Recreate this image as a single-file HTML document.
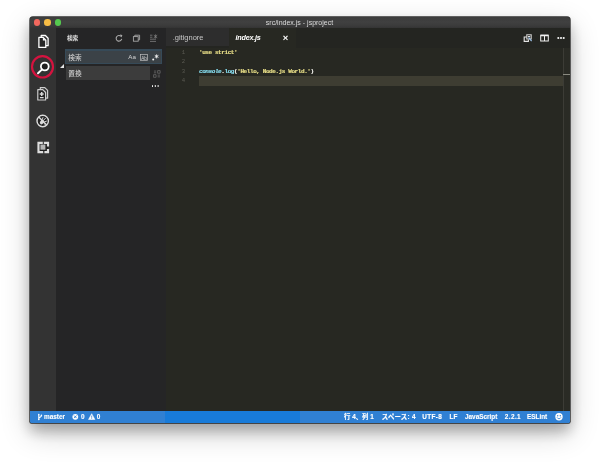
<!DOCTYPE html>
<html lang="ja">
<head>
<meta charset="utf-8">
<title>src/index.js - jsproject</title>
<style>
html,body{margin:0;padding:0;}
body{width:600px;height:465px;background:#fff;position:relative;overflow:hidden;font-family:"Liberation Sans","Noto Sans CJK JP",sans-serif;}
.abs{position:absolute;}
#stage{position:absolute;left:0;top:0;width:600px;height:465px;will-change:transform;}
#win{position:absolute;left:29.5px;top:17px;width:540.5px;height:406px;background:#272822;border-radius:3px 3px 1.5px 1.5px;box-shadow:0 8px 14px rgba(0,0,0,.27),0 10px 30px rgba(0,0,0,.2),0 0 0 0.7px rgba(0,0,0,.8);overflow:hidden;}
#title{left:0;top:0;width:540.5px;height:11px;background:linear-gradient(#3c3c3c,#404040 45%,#3c3c3c 75%,#343434);}
#title .t{position:absolute;left:0;width:540px;top:0;height:11px;line-height:11px;text-align:center;font-size:7px;color:#dcdcdc;}
.tl{position:absolute;top:2.400px;width:6.6px;height:6.6px;border-radius:50%;}
#act{left:0;top:11px;width:26px;height:383.5px;background:#333333;}
#side{left:26px;top:11px;width:110px;height:383.5px;background:#252526;}
#tabs{left:136px;top:11px;width:404.5px;height:19.5px;background:#242521;}
#editor{left:136px;top:30.5px;width:404.5px;height:364px;background:#272822;}
#status{left:0;top:394.4px;width:540.5px;height:11.6px;background:#3080d3;}
#status .l{position:absolute;left:135.5px;top:0;width:135px;height:11.5px;background:#187bd9;}
.st{position:absolute;top:0;height:11.5px;line-height:11.5px;font-size:6.4px;color:#fff;font-weight:bold;white-space:nowrap;-webkit-text-stroke:0.12px #fff;}
.code{position:absolute;left:33.5px;font-family:"Liberation Mono",monospace;font-size:6px;letter-spacing:-0.415px;line-height:9.5px;height:9.5px;white-space:pre;color:#f8f8f2;font-weight:bold;-webkit-text-stroke:0.18px currentColor;}
.ln{position:absolute;left:6.6px;width:13px;text-align:right;font-family:"Liberation Mono",monospace;font-size:5.6px;line-height:9.5px;height:9.5px;color:#5a5a52;}
</style>
</head>
<body>
<div id="stage">
<div id="win">
  <div id="title" class="abs">
    <div class="tl" style="left:4.100px;background:#f2685e;"></div>
    <div class="tl" style="left:14.800px;background:#f7bd45;"></div>
    <div class="tl" style="left:25.200px;background:#55c94f;"></div>
    <div class="t">src/index.js - jsproject</div>
  </div>
  <div id="act" class="abs">
    <svg class="abs" style="left:0;top:0" width="26" height="160" viewBox="0 0 26 160">
      <!-- explorer -->
      <g fill="none" stroke="#ffffff" stroke-width="1.300" stroke-linejoin="round">
        <path d="M11.200 9.300V7.500h4.200l2.700 2.700v7.500h-2.300"/>
        <path d="M8.900 9.400h4.200l2.700 2.700v7.300H8.900z" fill="#262626"/>
      </g>
      <path d="M12.900 9.400v3h3z" fill="#ffffff"/>
      <!-- search highlight circle -->
      <ellipse cx="12.500" cy="38.800" rx="10.500" ry="10.700" fill="none" stroke="#d4133f" stroke-width="2.200"/>
      <!-- search -->
      <circle cx="14.800" cy="38.500" r="3.900" fill="#202020" stroke="#ffffff" stroke-width="1.800"/>
      <path d="M12.100 41.400L8 45.300" stroke="#ffffff" stroke-width="1.900" stroke-linecap="round"/>
      <!-- scm -->
      <g transform="translate(-0.500 -0.300)">
      <g fill="none" stroke="#cdcdcd" stroke-width="1.200" stroke-linejoin="round">
        <path d="M10.800 61.800V59.900h4.500l2.800 2.800v7.800h-2"/>
        <path d="M8.300 62h5l2.800 2.800v7.500H8.300z" fill="#242424"/>
      </g>
      <path d="M12.200 64.400v4M10.200 66.400h4" stroke="#d8d8d8" stroke-width="1.500" fill="none"/>
      <path d="M10.400 69.900h3.700" stroke="#d8d8d8" stroke-width="1.200" fill="none"/>
      </g>
      <!-- debug -->
      <g transform="translate(-0.300 -0.400)">
      <circle cx="13" cy="93.400" r="5.700" fill="#232323" stroke="#dcdcdc" stroke-width="1.400"/>
      <path d="M9 89.400l8 8" stroke="#dcdcdc" stroke-width="1.300"/>
      <ellipse cx="12.200" cy="94.600" rx="1.800" ry="2.300" fill="#dcdcdc" transform="rotate(40 12.200 94.600)"/>
      <path d="M12.600 94l3.400-3.600M13.400 94.800l3.800-1.400M12 93.200l1.400-3.600M14.200 96.200l1.600 0.400" stroke="#dcdcdc" stroke-width="0.900"/>
      </g>
      <!-- extensions -->
      <rect x="8.500" y="114.800" width="9.500" height="9.300" fill="#1e1e1e"/>
      <g fill="none" stroke="#dedede" stroke-width="2.200">
        <path d="M12.800 114.800H8.500V124.100H13.200M13.800 114.800H18V118.400M18 121V124.100H14.400"/>
      </g>
      <rect x="10.400" y="116.500" width="5" height="5.200" fill="#b4b4b4"/>
    </svg>
  </div>
  <div id="side" class="abs">
    <div class="abs" style="left:11.400px;top:6.100px;font-size:5.700px;line-height:8px;color:#e2e2e2;font-weight:bold;">検索</div>
    <svg class="abs" style="left:55.200px;top:4px" width="54" height="14" viewBox="0 0 54 14">
      <!-- refresh -->
      <path d="M10 4.400A2.800 2.800 0 1 0 10.700 6.900" fill="none" stroke="#aaaaaa" stroke-width="1.100"/>
      <path d="M8.800 2.600l2.500 0.400l-0.600 2.500z" fill="#aaaaaa"/>
      <!-- collapse all -->
      <g fill="none" stroke="#a6a6a6" stroke-width="0.900">
        <path d="M23.800 4.600v-1.400h4.800v4.600h-1.400"/>
        <rect x="22.400" y="4.600" width="4.800" height="4.600"/>
      </g>
      <!-- clear -->
      <g stroke="#808080" stroke-width="0.8" fill="none">
        <path d="M39 3.200h2.400M39 5.200h2.400M39 7.200h6M39 9.400h6M44.600 2.400v4M42.800 3.200l3.400 2.600M46.200 3.200l-3.400 2.600"/>
      </g>
    </svg>
    <div class="abs" style="left:9.600px;top:21.400px;width:97.200px;height:14.600px;background:#364a58;"></div>
    <div class="abs" style="left:10.600px;top:22.600px;width:95.200px;height:12.200px;background:#3b4247;"></div>
    <div class="abs" style="left:12.800px;top:24.800px;font-size:6.700px;line-height:9px;color:#cacaca;font-weight:500;">検索</div>
    <div class="abs" style="left:72.800px;top:23.900px;font-size:6.200px;line-height:9px;color:#d4d4d4;">Aa</div>
    <svg class="abs" style="left:82px;top:23.700px" width="24" height="12" viewBox="0 0 24 12">
      <rect x="2.400" y="2.600" width="7" height="6" fill="none" stroke="#bdbdbd" stroke-width="0.7"/>
      <text x="3.200" y="7.600" font-family="Liberation Sans, sans-serif" font-size="4.600" fill="#cfcfcf">Ab</text>
      <circle cx="15.200" cy="7.600" r="1" fill="#f0f0f0"/>
      <path d="M18.600 2.400v4M16.800 3.400l3.600 2M20.400 3.400l-3.600 2" stroke="#f0f0f0" stroke-width="0.9"/>
    </svg>
    <div class="abs" style="left:10px;top:38.400px;width:84.500px;height:13.800px;background:#3c3c3c;"></div>
    <div class="abs" style="left:12.800px;top:41.100px;font-size:6.700px;line-height:9px;color:#cacaca;font-weight:500;">置換</div>
    <svg class="abs" style="left:94px;top:40px" width="14" height="12" viewBox="0 0 14 12">
      <g stroke="#707070" stroke-width="0.900" fill="none" transform="translate(1.400 1.200) scale(0.78)">
        <path d="M3.200 2.400h3M3.200 4.600h3M8 1.800h3.200v3.400H8zM2.800 7h3.200v3.400H2.800zM8 7.600h3M8 9.800h3"/>
      </g>
    </svg>
    <div class="abs" style="left:96.200px;top:57px;width:1.700px;height:1.700px;border-radius:50%;background:#fff;box-shadow:2.800px 0 0 #fff,5.600px 0 0 #fff;"></div>
    <div class="abs" style="left:4.700px;top:36.400px;width:0;height:0;border-left:4.400px solid transparent;border-bottom:4.400px solid #e4e4e4;"></div>
  </div>
  <div id="tabs" class="abs">
    <div class="abs" style="left:0;top:0;width:63px;height:17.5px;background:#2d2d2d;"></div>
    <div class="abs" style="left:63px;top:0;width:67px;height:19.5px;background:#272822;"></div>
    <div class="abs" style="left:7.2px;top:5px;font-size:7.500px;line-height:9px;color:#c6c6c6;">.gitignore</div>
    <div class="abs" style="left:70px;top:5px;font-size:7.200px;line-height:9px;color:#fff;font-style:italic;font-weight:bold;letter-spacing:-0.200px;">index.js</div>
    <div class="abs" style="left:117.300px;top:5px;font-size:9.400px;line-height:9px;color:#fff;font-weight:bold;">×</div>
  </div>
  <svg class="abs" style="left:487.500px;top:11px" width="52" height="20" viewBox="0 0 52 20">
    <!-- open changes -->
    <g fill="none" stroke="#e4e4e4" stroke-width="1.100">
      <path d="M9.800 9h-2.600v4.400h4.200v-2"/>
      <path d="M9.800 6.800h4.400v4.200h-4.400z" stroke="#d0d0d0"/>
    </g>
    <path d="M11.600 9.400l3 3.800" stroke="#9cc0e6" stroke-width="1.200" fill="none"/>
    <path d="M10.800 8.600l2.400-0.200" stroke="#e8e8e8" stroke-width="1" fill="none"/>
    <!-- split -->
    <g transform="translate(-1.300 -0.400)">
    <rect x="25" y="7.600" width="7.600" height="5.800" fill="none" stroke="#f0f0f0" stroke-width="1"/>
    <path d="M25 8h7.600" stroke="#f0f0f0" stroke-width="1.500"/>
    <path d="M28.800 7.600v5.800" stroke="#f0f0f0" stroke-width="1"/>
    </g>
    <!-- more -->
    <g transform="translate(-1.500 -0.200)"><circle cx="42.800" cy="10.200" r="1.050" fill="#f6f6f6"/><circle cx="45.500" cy="10.200" r="1.050" fill="#f6f6f6"/><circle cx="48.200" cy="10.200" r="1.050" fill="#f6f6f6"/></g>
  </svg>
  <div id="editor" class="abs">
    <div class="abs" style="left:33px;top:28.5px;width:364.5px;height:9.5px;background:#3e3d32;"></div>
    <div class="abs" style="left:397.5px;top:0;width:6.5px;height:364px;background:#2a2b25;border-left:0.5px solid #3c3c36;"></div>
    <div class="abs" style="left:397.5px;top:26px;width:6.5px;height:1px;background:#8a8a80;"></div>
    <div class="ln" style="top:0">1</div>
    <div class="ln" style="top:9.5px">2</div>
    <div class="ln" style="top:19px">3</div>
    <div class="ln" style="top:28.5px">4</div>
    <div class="code" style="top:0"><span style="color:#e9df88">'use strict'</span></div>
    <div class="code" style="top:19px"><span style="color:#86dcee;font-style:italic">console</span>.<span style="color:#86dcee">log</span>(<span style="color:#e9df88">'Hello, Node.js World.'</span>)</div>
  </div>
  <div id="status" class="abs">
    <div class="l"></div>
    <svg class="abs" style="left:6px;top:0" width="66" height="11.5" viewBox="0 0 66 11.5">
      <g fill="none" stroke="#fff" stroke-width="1.100">
        <path d="M2.800 3.800v4.800M5.400 4.600c0 2-2.600 1.400-2.600 3"/>
      </g>
      <circle cx="2.800" cy="3.600" r="0.800" fill="#fff"/><circle cx="5.400" cy="4.400" r="0.800" fill="#fff"/><circle cx="2.800" cy="8.500" r="0.800" fill="#fff"/>
      <circle cx="39.300" cy="5.800" r="2.900" fill="#fff"/>
      <path d="M38 4.500l2.600 2.600M40.600 4.500l-2.600 2.600" stroke="#3080d3" stroke-width="0.9"/>
      <path d="M55.700 2.700l3.200 5.800h-6.400z" fill="#fff" stroke="#fff" stroke-width="0.500" stroke-linejoin="round"/>
      <path d="M55.700 4.600v2.200M55.700 7.300v0.700" stroke="#3080d3" stroke-width="0.800"/>
    </svg>
    <div class="st" style="left:14.500px;">master</div>
    <div class="st" style="left:51.500px;">0</div>
    <div class="st" style="left:67.300px;">0</div>
    <div class="st" style="left:314.5px;">行 4、列 1</div>
    <div class="st" style="left:352.200px;letter-spacing:0.250px;">スペース: 4</div>
    <div class="st" style="left:392.800px;letter-spacing:0.350px;">UTF-8</div>
    <div class="st" style="left:420px;">LF</div>
    <div class="st" style="left:435.5px;">JavaScript</div>
    <div class="st" style="left:475.300px;letter-spacing:0.400px;">2.2.1</div>
    <div class="st" style="left:497.500px;">ESLint</div>
    <svg class="abs" style="left:524px;top:1px" width="10" height="10" viewBox="0 0 10 10">
      <circle cx="5" cy="4.700" r="3.700" fill="#fff"/>
      <circle cx="3.700" cy="3.800" r="0.700" fill="#3080d3"/><circle cx="6.300" cy="3.800" r="0.700" fill="#3080d3"/>
      <path d="M3 5.400c0.800 1.800 3.200 1.800 4 0" fill="none" stroke="#3080d3" stroke-width="0.800"/>
    </svg>
  </div>
</div>
</div>
</body>
</html>
